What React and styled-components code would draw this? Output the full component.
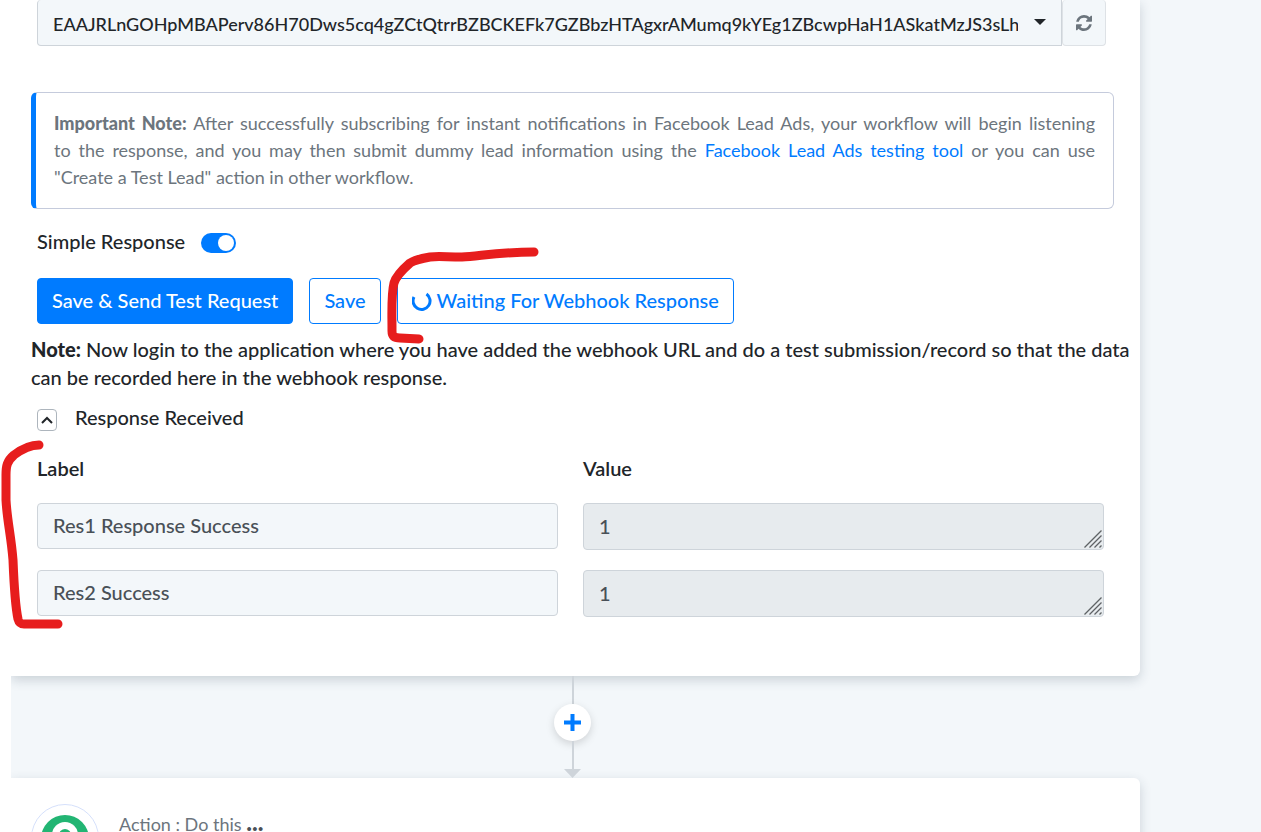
import React from "react";
import styled, { createGlobalStyle } from "styled-components";

const GlobalStyle = createGlobalStyle`
  * { box-sizing: border-box; }
  body {
    margin: 0;
    background: #fff;
    color: #212529;
    font-family: Lato, "Liberation Sans", sans-serif;
    font-size: 20px;
    font-weight: 500;
    line-height: 28px;
  }
  b { font-weight: 900; }
  button, input, select, textarea {
    font: inherit;
    color: inherit;
  }
`;

const Page = styled.div`
  position: relative;
  height: 100vh;
  padding-left: 11px;
  overflow: hidden;
`;

const Canvas = styled.main`
  min-height: 100%;
  padding-right: 121px;
  background: #f3f7fa;
  overflow: hidden;
`;

const Card = styled.section`
  padding: ${(props) => props.$pad};
  background: #fff;
  border-radius: ${(props) => props.$radius};
  box-shadow: 0 4px 12px rgba(40, 60, 80, 0.2);
`;

const TokenRow = styled.div`
  display: flex;
  margin: 0 8px 46px 6px;
`;

const SelectWrap = styled.div`
  position: relative;
  flex: 1;
  min-width: 0;
`;

const TokenSelect = styled.select`
  display: block;
  width: 100%;
  height: 46px;
  padding: 3px 43px 0 15px;
  border: 1px solid #ced4da;
  border-top: 0;
  border-radius: 4px 0 0 4px;
  background: #f3f7fa;
  font-size: 18px;
  appearance: none;
`;

const Caret = styled.svg`
  position: absolute;
  top: 19px;
  right: 16px;
  pointer-events: none;
`;

const RefreshButton = styled.button`
  display: flex;
  align-items: center;
  justify-content: center;
  width: 44px;
  height: 46px;
  padding: 0;
  border: 1px solid #dee2e6;
  border-top: 0;
  border-radius: 4px;
  background: #f3f7fa;
  color: #6c757d;
`;

const Notice = styled.p`
  margin: 0;
  padding: 17px 18px;
  border: 1px solid #c5cbdc;
  border-left: 5px solid #007bff;
  border-radius: 6px;
  color: #6c757d;
  font-size: 18px;
  font-weight: 400;
  line-height: 27px;
  text-align: justify;
`;

const Link = styled.a`
  color: #007bff;
  text-decoration: none;
`;

const SwitchRow = styled.label`
  display: flex;
  align-items: center;
  gap: 16px;
  margin: 18px 6px 23px;
`;

const Switch = styled.input`
  width: 35px;
  height: 20px;
  margin: 4px 0 0;
  padding: 2px;
  border-radius: 10px;
  background: #adb5bd;
  appearance: none;

  &::before {
    content: "";
    display: block;
    width: 16px;
    height: 16px;
    border-radius: 50%;
    background: #fff;
  }
  &:checked {
    background: #007bff;
  }
  &:checked::before {
    margin-left: auto;
  }
`;

const Actions = styled.div`
  display: flex;
  gap: 16px;
  margin: 0 6px 11px;
`;

const Button = styled.button`
  display: flex;
  align-items: center;
  gap: 5px;
  height: 46px;
  padding: 0 14px 2px;
  border: 1px solid #007bff;
  border-radius: 4px;
  background: ${(props) => (props.$primary ? "#007bff" : "#fff")};
  color: ${(props) => (props.$primary ? "#fff" : "#007bff")};
`;

const Note = styled.p`
  margin: 0 -20px 12px 0;
`;

const ResponseHead = styled.div`
  display: flex;
  align-items: center;
  gap: 18px;
  margin: 0 6px 23px;
`;

const Collapse = styled.button`
  display: flex;
  align-items: center;
  justify-content: center;
  width: 20px;
  height: 22px;
  margin-top: 6px;
  padding: 0;
  border: 1px solid #adb5bd;
  border-radius: 4px;
  background: #fff;
`;

const Fields = styled.div`
  display: grid;
  grid-template-columns: 1fr 1fr;
  column-gap: 25px;
  row-gap: 20px;
  margin: 0 10px 0 6px;
`;

const FieldTitle = styled.div`
  padding-bottom: 1px;
  font-weight: 600;
`;

const LabelInput = styled.input`
  width: 100%;
  height: 46px;
  padding: 0 15px 2px;
  border: 1px solid #ced4da;
  border-radius: 4px;
  background: #f3f7fa;
  color: #495057;
`;

const ValueWrap = styled.div`
  position: relative;
`;

const ValueArea = styled.textarea`
  display: block;
  width: 100%;
  height: 47px;
  padding: 8px 15px;
  border: 1px solid #ced4da;
  border-radius: 4px;
  background: #e7ebee;
  color: #495057;
  overflow: hidden;
  resize: none;
`;

const Grip = styled.svg`
  position: absolute;
  right: 2px;
  bottom: 2px;
  pointer-events: none;
`;

const Connector = styled.div`
  display: flex;
  flex-direction: column;
  align-items: center;
  height: 102px;
  padding-right: 6px;
`;

const Line = styled.div`
  flex: 1;
  width: 2px;
  background: #ced4da;
`;

const AddButton = styled.button`
  display: flex;
  align-items: center;
  justify-content: center;
  width: 37px;
  height: 37px;
  padding: 0;
  border: 0;
  border-radius: 50%;
  background: #fff;
  box-shadow: 0 3px 8px rgba(0, 0, 0, 0.15);
`;

const ActionHead = styled.div`
  display: flex;
  align-items: flex-start;
  gap: 20px;
`;

const ActionTitle = styled.div`
  padding-top: 6px;
  color: #6c757d;
  font-size: 18px;
  font-weight: 400;

  b {
    color: #495057;
    font-size: 24px;
    line-height: 20px;
  }
`;

const Marks = styled.svg`
  position: absolute;
  top: 0;
  left: 0;
  pointer-events: none;
`;

const token =
  "EAAJRLnGOHpMBAPerv86H70Dws5cq4gZCtQtrrBZBCKEFk7GZBbzHTAgxrAMumq9kYEg1ZBcwpHaH1ASkatMzJS3sLhZA";

const fields = [
  { label: "Res1 Response Success", value: "1" },
  { label: "Res2 Success", value: "1" },
];

const App = () => {
  return (
    <Page>
      <GlobalStyle />
      <Canvas>
        <Card $pad="0 26px 59px 20px" $radius="0 0 6px 0">
          <TokenRow>
            <SelectWrap>
              <TokenSelect aria-label="Access token">
                <option>{token}</option>
              </TokenSelect>
              <Caret width="12" height="6" viewBox="0 0 12 6">
                <path d="M0 0H12L6 6Z" fill="#212529" />
              </Caret>
            </SelectWrap>
            <RefreshButton aria-label="Refresh">
              <svg width="16" height="16" viewBox="0 0 1536 1536" fill="currentColor">
                <path d="M1511 928q0 5-1 7-64 268-268 434.500T764 1536q-146 0-282.500-55T238 1324l-129 129q-19 19-45 19t-45-19-19-45V960q0-26 19-45t45-19h448q26 0 45 19t19 45-19 45l-137 137q71 66 161 102t187 36q134 0 250-65t186-179q11-17 53-117 8-23 30-23h192q13 0 22.500 9.500t9.500 22.500zm25-800v448q0 26-19 45t-45 19h-448q-26 0-45-19t-19-45 19-45l138-138Q969 256 768 256q-134 0-250 65T332 500q-11 17-53 117-8 23-30 23H50q-13 0-22.500-9.500T18 608v-7q65-268 270-434.500T768 0q146 0 284 55.500T1297 212l130-129q19-19 45-19t45 19 19 45z" />
              </svg>
            </RefreshButton>
          </TokenRow>

          <Notice>
            <b>Important Note:</b> After successfully subscribing for instant notifications in
            Facebook Lead Ads, your workflow will begin listening to&nbsp;the response, and you may
            then submit dummy lead information using the{" "}
            <Link href="#testing-tool">Facebook Lead Ads testing tool</Link> or you can use
            "Create&nbsp;a&nbsp;Test Lead" action in other workflow.
          </Notice>

          <SwitchRow>
            Simple Response
            <Switch type="checkbox" defaultChecked />
          </SwitchRow>

          <Actions>
            <Button $primary>Save &amp; Send Test Request</Button>
            <Button>Save</Button>
            <Button>
              <svg width="20" height="22" viewBox="0 0 20 22" fill="none">
                <path d="M2 8A8.500 8.500 0 1 0 14.500 5" stroke="#007bff" strokeWidth="3" />
              </svg>
              Waiting For Webhook Response
            </Button>
          </Actions>

          <Note>
            <b>Note:</b> Now login to the application where you have added the webhook URL and do a
            test submission/record so that the data can be recorded here in the webhook response.
          </Note>

          <ResponseHead>
            <Collapse aria-label="Collapse response">
              <svg width="12" height="8" viewBox="0 0 12 8" fill="none">
                <path d="M1 7L6 2L11 7" stroke="#212529" strokeWidth="2" />
              </svg>
            </Collapse>
            Response Received
          </ResponseHead>

          <Fields>
            <FieldTitle id="label-title">Label</FieldTitle>
            <FieldTitle id="value-title">Value</FieldTitle>
            {fields.map((field) => (
              <React.Fragment key={field.label}>
                <LabelInput aria-labelledby="label-title" defaultValue={field.label} />
                <ValueWrap>
                  <ValueArea aria-labelledby="value-title" readOnly defaultValue={field.value} />
                  <Grip width="18" height="18" viewBox="0 0 18 18">
                    <path
                      d="M0.500 17.500L17.500 0.500M5.500 17.500L17.500 5.500M10.500 17.500L17.500 10.500M15.500 17.500L17.500 15.500"
                      stroke="#5f6265"
                      strokeWidth="1.300"
                    />
                  </Grip>
                </ValueWrap>
              </React.Fragment>
            ))}
          </Fields>
        </Card>

        <Connector>
          <Line />
          <AddButton aria-label="Add step">
            <svg width="17" height="17" viewBox="0 0 17 17">
              <path d="M8.500 0V17M0 8.500H17" stroke="#007bff" strokeWidth="4" />
            </svg>
          </AddButton>
          <Line />
          <svg width="17" height="9" viewBox="0 0 17 9">
            <path d="M0 0H17L8.500 9Z" fill="#ced4da" />
          </svg>
        </Connector>

        <Card $pad="26px 20px" $radius="0 6px 6px 0">
          <ActionHead>
            <svg width="68" height="68" viewBox="0 0 68 68">
              <circle cx="34" cy="34" r="33.500" fill="#fff" stroke="#d5e0fb" />
              <circle cx="34" cy="35" r="24" fill="#22b573" />
              <circle cx="34" cy="31" r="13" fill="#fff" />
              <circle cx="34" cy="31" r="6" fill="#22b573" />
            </svg>
            <ActionTitle>
              Action : Do this <b>...</b>
            </ActionTitle>
          </ActionHead>
        </Card>
      </Canvas>

      <Marks width="560" height="640" viewBox="0 0 560 640" fill="none" stroke="#e71d1d" strokeWidth="9" strokeLinecap="round" strokeLinejoin="round">
        <path d="M534 252C500 252 480 256 462 257C446 257 438 256 430 257C418 259 415 260 410 263C402 270 396 276 394 283C391 295 392 312 392 331C392 336 394 338 400 338L419 339" />
        <path d="M39 445C30 445 22 449 14 455C7 461 6 466 6 475V500C7 520 11 535 13 560C14 585 15 605 18 619C19 623 20 624 24 624H58" />
      </Marks>
    </Page>
  );
};

export default App;
